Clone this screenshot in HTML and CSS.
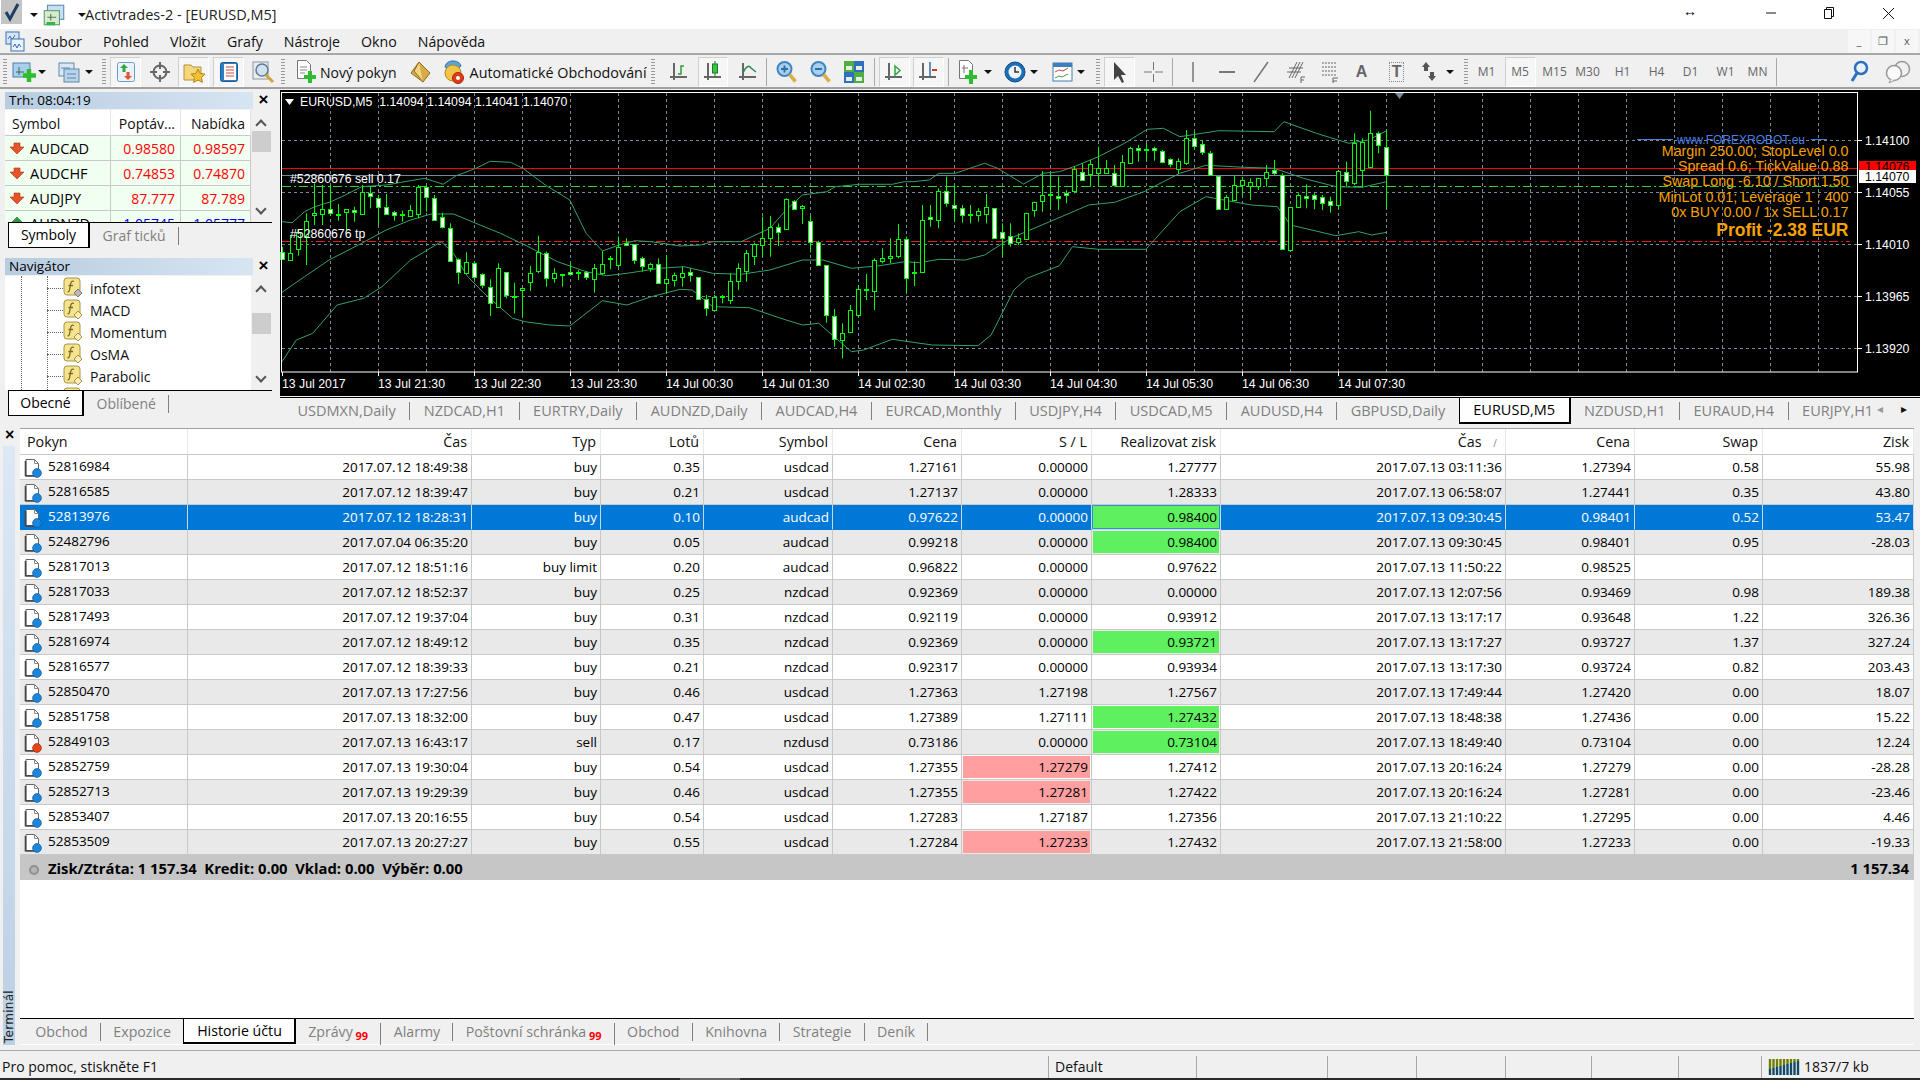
FILE: index.html
```html
<!DOCTYPE html>
<html lang="cs">
  <head>
    <meta charset="UTF-8" />
    <title>Activtrades-2 - [EURUSD,M5]</title>
    <link rel="stylesheet" href="styles.css">
  </head>
  <body>
    <!-- Shared icons -->
    <svg class="defs" width="0" height="0">
      <symbol id="axes" viewBox="0 0 20 24">
        <path d="M5 3v17M1 17h17" fill="none" stroke="#666" stroke-width="2"/>
      </symbol>
      <symbol id="ord" viewBox="0 0 18 20">
        <path d="M2 1.500h8.500l4 4v12H2z" fill="#fff" stroke="#666"/>
        <path d="M10.500 1.500v4h4" fill="none" stroke="#888"/>
        <path d="M2 18h10M1.500 3v15.500" stroke="#444" stroke-width="1.600"/>
        <circle cx="13" cy="15" r="4.400" fill="#1c86dc" stroke="#0d5a9c" stroke-width=".7"/>
      </symbol>
      <symbol id="ord-sell" viewBox="0 0 18 20">
        <path d="M2 1.500h8.500l4 4v12H2z" fill="#fff" stroke="#666"/>
        <path d="M10.500 1.500v4h4" fill="none" stroke="#888"/>
        <path d="M2 18h10M1.500 3v15.500" stroke="#444" stroke-width="1.600"/>
        <circle cx="13" cy="15" r="4.400" fill="#e8461a" stroke="#a02c0a" stroke-width=".7"/>
      </symbol>
      <symbol id="arrow-down" viewBox="0 0 16 14">
        <path d="M5 2h6v4h4l-7 7-7-7h4z" fill="#e8532a" stroke="#a8381a" stroke-width=".6"/>
      </symbol>
      <symbol id="arrow-up" viewBox="0 0 16 14">
        <path d="M5 13h6V8h4L8 1 1 8h4z" fill="#2e9a3a" stroke="#1d6a28" stroke-width=".6"/>
      </symbol>
      <symbol id="func" viewBox="0 0 20 22">
        <rect x="1" y="1" width="16" height="17" rx="3" fill="#f5e48c" stroke="#a8934a"/>
        <path d="M11 4.500c-2-.8-3 0-3.300 2L6.500 13c-.3 1.600-1 2-2 1.700M5.500 8.500h4.500" fill="none" stroke="#77692a" stroke-width="1.300"/>
        <path d="M15 12l4 4-4 4-4-4z" fill="#f7eeb4" stroke="#a8934a"/>
      </symbol>
      <symbol id="func-grey" viewBox="0 0 20 22">
        <rect x="1" y="1" width="16" height="17" rx="3" fill="#f5e48c" stroke="#a8934a"/>
        <path d="M11 4.500c-2-.8-3 0-3.300 2L6.500 13c-.3 1.600-1 2-2 1.700M5.500 8.500h4.500" fill="none" stroke="#77692a" stroke-width="1.300"/>
        <path d="M15 12l4 4-4 4-4-4z" fill="#b8b8b8" stroke="#777"/>
      </symbol>
    </svg>

    <!-- Window title -->
    <div class="titlebar">
      <span class="qa-check">
        <svg width="20" height="22" viewBox="0 0 20 22"><path d="M4 11l4 7 8-15" fill="none" stroke="#1c3f66" stroke-width="3"/></svg>
      </span>
      <span class="caret ml8"></span>
      <svg class="ml4" width="24" height="26" viewBox="0 0 22 24">
        <rect x="5" y="3" width="15" height="13" fill="#c7dff2" stroke="#5b8db8"/>
        <rect x="2" y="8" width="14" height="13" fill="#d8ead0" stroke="#5f9a70"/>
        <path d="M5 14h8M8 11v6" stroke="#4b7a58"/>
        <path d="M4 20h8" stroke="#39b14a" stroke-width="3"/>
      </svg>
      <span class="caret ml12"></span>
      <span class="window-name">Activtrades-2 - [EURUSD,M5]</span>
      <span class="win-resize">↔</span>
      <svg class="win-btn" width="12" height="12" viewBox="0 0 12 12"><path d="M1 6h10" stroke="#111"/></svg>
      <svg class="win-btn restore" width="12" height="14" viewBox="0 0 12 14"><path d="M3.500 3.500V1.500h7v9h-2M1.500 3.500h7v9h-7z" fill="none" stroke="#111"/></svg>
      <svg class="win-btn close" width="13" height="13" viewBox="0 0 13 13"><path d="M1 1l11 11M12 1L1 12" stroke="#111"/></svg>
    </div>

    <!-- Menu -->
    <div class="menubar">
      <svg class="menu-logo" width="20" height="22" viewBox="0 0 20 22">
        <rect x="1" y="1" width="13" height="12" fill="#d5e6f7" stroke="#3f6fb5"/>
        <path d="M3 8l2-3 2 4 3-5" fill="none" stroke="#3f6fb5"/>
        <rect x="6" y="8" width="13" height="12" fill="#eaf2fb" stroke="#3f6fb5"/>
        <path d="M8 16l2-3 2 4 2-4 2 3" fill="none" stroke="#3f6fb5"/>
      </svg>
      <span class="menu-item first">Soubor</span>
      <span class="menu-item">Pohled</span>
      <span class="menu-item">Vložit</span>
      <span class="menu-item">Grafy</span>
      <span class="menu-item">Nástroje</span>
      <span class="menu-item">Okno</span>
      <span class="menu-item">Nápověda</span>
      <div class="mdi-btns">
        <span class="mdi-btn">_</span>
        <span class="mdi-btn">❐</span>
        <span class="mdi-btn">x</span>
      </div>
    </div>

    <!-- Toolbar -->
    <div class="toolbar">
      <span class="grip ml3"></span>
      <span class="tool w24 ml5">
        <svg width="24" height="24" viewBox="0 0 24 24"><rect x="1" y="3" width="17" height="14" fill="#a9cfee" stroke="#4c7fa8"/><path d="M4 12h8M7 7v8" stroke="#3b6a50"/><path d="M17 9v13M11 15.500h13" stroke="#2ebd2e" stroke-width="4.500"/></svg>
      </span>
      <span class="caret-box ml2"><span class="caret"></span></span>
      <span class="tool w22 ml12">
        <svg width="22" height="24" viewBox="0 0 22 24"><rect x="1" y="3" width="15" height="13" fill="#dbe8f3" stroke="#5f87a8"/><rect x="6" y="9" width="15" height="13" fill="#b9d4ea" stroke="#5f87a8"/><path d="M3 8h9M9 14h9M9 18h9" stroke="#5f87a8"/></svg>
      </span>
      <span class="caret-box ml5"><span class="caret"></span></span>
      <span class="grip ml9"></span>
      <span class="tool on w31 ml4">
        <svg width="20" height="22" viewBox="0 0 20 22"><rect x="1.500" y="1.500" width="17" height="19" rx="2" fill="#eaf3fb" stroke="#6f9dc5"/><path d="M8 3l4 4H9.500v4h-3V7H4z" fill="#36a843"/><path d="M12 19l-4-4h2.500v-4h3v4H16z" fill="#e8532a"/></svg>
      </span>
      <span class="tool w20 ml9">
        <svg width="20" height="22" viewBox="0 0 20 22"><circle cx="10" cy="11" r="6.500" fill="none" stroke="#666" stroke-width="2"/><path d="M10 1v7M10 14v7M0 11h7M13 11h7" stroke="#666" stroke-width="2"/></svg>
      </span>
      <span class="tool on w31 ml8">
        <svg width="24" height="24" viewBox="0 0 24 24"><path d="M2 5h7l2 2h8v13H2z" fill="#f5d67a" stroke="#b2923d"/><path d="M16 9l2.200 4.500 4.800.6-3.500 3.400.9 4.900-4.400-2.400-4.400 2.400.9-4.900L9 14.100l4.800-.6z" fill="#f2c230" stroke="#b0861b"/></svg>
      </span>
      <span class="tool on w31 ml4">
        <svg width="20" height="24" viewBox="0 0 20 24"><rect x="1.500" y="2.500" width="17" height="19" rx="2" fill="#2b7fc7" stroke="#1c5a94"/><rect x="5" y="4" width="12" height="16" fill="#fff"/><path d="M7 7h8M7 10h8M7 13h8M7 16h8" stroke="#d24a3a"/></svg>
      </span>
      <span class="tool w25 ml7">
        <svg width="25" height="24" viewBox="0 0 25 24"><rect x="2" y="2" width="15" height="17" fill="#e9edf0" stroke="#8a97a3"/><circle cx="11" cy="10" r="6" fill="#cfe2f2" stroke="#66788a" stroke-width="1.500"/><path d="M15 15l7 7" stroke="#d0a635" stroke-width="3"/></svg>
      </span>
      <span class="grip ml5"></span>
      <span class="tool w20 ml11">
        <svg width="22" height="26" viewBox="0 0 22 26"><path d="M2.500 1.500h9l4 4v14h-13z" fill="#fff" stroke="#777"/><path d="M5 8h7M5 11h7M5 14h5" stroke="#888"/><path d="M15 12v12M9 18h12" stroke="#2ebd2e" stroke-width="4"/></svg>
      </span>
      <span class="tool-label ml4">Nový pokyn</span>
      <span class="tool w23 ml12">
        <svg width="23" height="24" viewBox="0 0 23 24"><path d="M10 2l11 11-7 9L2 13z" fill="#d7ab45" stroke="#8f6d22"/><path d="M10 2L5 11l9 11" fill="#f2d27e" stroke="#8f6d22"/></svg>
      </span>
      <span class="tool w22 ml11">
        <svg width="24" height="26" viewBox="0 0 24 26"><path d="M3 8c1-5 5-6 8-6s7 1 8 5l-4 3H7z" fill="#5ea4d6" stroke="#2f6f9e"/><circle cx="11" cy="14" r="8" fill="#f2c54a" stroke="#b08a22"/><circle cx="16" cy="19" r="5.500" fill="#e23b1c" stroke="#a52810"/><circle cx="16" cy="19" r="2" fill="#fff"/></svg>
      </span>
      <span class="tool-label auto-label ml5">Automatické Obchodování</span>
      <span class="grip ml4"></span>
      <span class="tool w20 ml14">
        <svg width="20" height="24" viewBox="0 0 20 24"><use href="#axes"/><path d="M9 14h3V6h3" fill="none" stroke="#2e9a3a" stroke-width="1.500"/></svg>
      </span>
      <span class="tool on w30 ml9">
        <svg width="20" height="24" viewBox="0 0 20 24"><use href="#axes"/><path d="M12 1v16" stroke="#1d7a2a"/><rect x="9.500" y="4" width="5" height="9" fill="#35c63d" stroke="#1d7a2a"/></svg>
      </span>
      <span class="tool w20 ml10">
        <svg width="20" height="24" viewBox="0 0 20 24"><use href="#axes"/><path d="M5 13c3-7 6-8 8-5l5 4" fill="none" stroke="#2e8b57" stroke-width="1.500"/></svg>
      </span>
      <span class="tb-sep ml8"></span>
      <span class="tool w21 ml9">
        <svg width="21" height="24" viewBox="0 0 21 24"><circle cx="8.500" cy="9" r="7" fill="#a9d0ee" stroke="#3f86c2" stroke-width="2"/><path d="M5 9h7M8.500 5.500v7" stroke="#2f6fa5" stroke-width="2"/><path d="M13.500 14.500l6 7" stroke="#d8b045" stroke-width="3.500"/></svg>
      </span>
      <span class="tool w21 ml13">
        <svg width="21" height="24" viewBox="0 0 21 24"><circle cx="8.500" cy="9" r="7" fill="#a9d0ee" stroke="#3f86c2" stroke-width="2"/><path d="M5 9h7" stroke="#2f6fa5" stroke-width="2"/><path d="M13.500 14.500l6 7" stroke="#d8b045" stroke-width="3.500"/></svg>
      </span>
      <span class="tool w20 ml13">
        <svg width="20" height="24" viewBox="0 0 20 24"><rect x="0" y="1" width="10" height="11" fill="#4fae3f"/><rect x="10" y="1" width="10" height="11" fill="#2e6fc0"/><rect x="0" y="12" width="10" height="11" fill="#2e6fc0"/><rect x="10" y="12" width="10" height="11" fill="#4fae3f"/><path d="M2 6h6v4H2zM12 6h6v4h-6zM2 17h6v4H2zM12 17h6v4h-6z" fill="#e6f0e0"/></svg>
      </span>
      <span class="tb-sep ml10"></span>
      <span class="tool on w31 ml4">
        <svg width="20" height="24" viewBox="0 0 20 24"><use href="#axes"/><path d="M11 6l5 4.500-5 4.500z" fill="none" stroke="#2ea83a" stroke-width="1.500"/></svg>
      </span>
      <span class="tool on w31 ml3">
        <svg width="20" height="24" viewBox="0 0 20 24"><use href="#axes"/><path d="M12 2v15" stroke="#2f6fa5" stroke-width="1.500"/><path d="M19 10h-3M18 10l-4 0" stroke="#d9381e" stroke-width="2"/></svg>
      </span>
      <span class="tb-sep ml4"></span>
      <span class="tool w20 ml10">
        <svg width="22" height="26" viewBox="0 0 22 26"><path d="M1.500 1.500h9l4 4v14h-13z" fill="#fff" stroke="#777"/><path d="M4 9h6M6 6v8" stroke="#777"/><path d="M13 11v14M7 18h12" stroke="#2ebd2e" stroke-width="4"/></svg>
      </span>
      <span class="caret-box ml5"><span class="caret"></span></span>
      <span class="tool w20 ml13">
        <svg width="22" height="24" viewBox="0 0 22 24"><circle cx="11" cy="12" r="10" fill="#1b6fb5" stroke="#0f4d85"/><circle cx="11" cy="12" r="6.500" fill="#eef4fa"/><path d="M11 7v5h4" fill="none" stroke="#333" stroke-width="1.500"/></svg>
      </span>
      <span class="caret-box ml5"><span class="caret"></span></span>
      <span class="tool w21 ml14">
        <svg width="21" height="24" viewBox="0 0 21 24"><rect x="1" y="3" width="19" height="18" fill="#fff" stroke="#3d7fb8"/><rect x="1" y="3" width="19" height="4" fill="#3d7fb8"/><path d="M3 12l4-2 4 1 5-3" fill="none" stroke="#c9482f"/><path d="M3 18l4-2 3 1 6-3" fill="none" stroke="#3aa04a"/></svg>
      </span>
      <span class="caret-box ml4"><span class="caret"></span></span>
      <span class="grip ml11"></span>
      <span class="tool on w31 ml4">
        <svg width="14" height="24" viewBox="0 0 14 24"><path d="M2 2v18l4-4 4 7 2-1-3-7h5z" fill="#444"/></svg>
      </span>
      <span class="tool w21 ml8">
        <svg width="21" height="24" viewBox="0 0 21 24"><path d="M10.500 2v8M10.500 14v8M1 12h8M12 12h8" stroke="#777"/></svg>
      </span>
      <span class="tb-sep ml8"></span>
      <span class="tool w20 ml10">
        <svg width="20" height="24" viewBox="0 0 20 24"><path d="M10 2v20" stroke="#777" stroke-width="1.500"/></svg>
      </span>
      <span class="tool w20 ml14">
        <svg width="20" height="24" viewBox="0 0 20 24"><path d="M2 12h16" stroke="#777" stroke-width="2"/></svg>
      </span>
      <span class="tool w20 ml14">
        <svg width="20" height="24" viewBox="0 0 20 24"><path d="M3 22L17 2" stroke="#777" stroke-width="1.500"/></svg>
      </span>
      <span class="tool w20 ml15">
        <svg width="20" height="24" viewBox="0 0 20 24"><path d="M3 18L11 2M6 18L14 2M9 18L17 2M1 12h14M3 8h14" stroke="#666"/><path d="M15 17h4M15 20h3M15 17v6" stroke="#666"/></svg>
      </span>
      <span class="tool w20 ml14">
        <svg width="20" height="24" viewBox="0 0 20 24"><path d="M2 3h14M2 7h14M2 11h14M2 15h14" stroke="#666" stroke-dasharray="2 1"/><path d="M13 18h5M13 21h4M13 18v5" stroke="#666"/></svg>
      </span>
      <span class="tool w20 ml12"><span class="draw-letter">A</span></span>
      <span class="tool w20 ml15"><span class="draw-letter boxed">T</span></span>
      <span class="tool w20 ml12">
        <svg width="20" height="24" viewBox="0 0 20 24"><path d="M7 2l4 5H9v4H5V7H3z" fill="#555"/><path d="M13 21l-4-5h2v-4h4v4h2z" fill="#555"/></svg>
      </span>
      <span class="caret-box ml7"><span class="caret"></span></span>
      <span class="grip ml10"></span>
      <span class="period ml5">M1</span>
      <span class="period on wide ml4">M5</span>
      <span class="period ml5">M15</span>
      <span class="period ml5">M30</span>
      <span class="period ml7">H1</span>
      <span class="period ml6">H4</span>
      <span class="period ml6">D1</span>
      <span class="period ml7">W1</span>
      <span class="period ml4">MN</span>
      <span class="tb-sep ml4"></span>
      <span class="tool w20 push">
        <svg width="20" height="24" viewBox="0 0 20 24"><circle cx="12" cy="8" r="6" fill="#e8f2fb" stroke="#2d6fc0" stroke-width="2.500"/><path d="M8 13l-5 8" stroke="#2d6fc0" stroke-width="3"/></svg>
      </span>
      <span class="tool w24 ml17">
        <svg width="26" height="24" viewBox="0 0 26 24"><circle cx="17" cy="9" r="7.500" fill="#f0f0f0" stroke="#999" stroke-width="1.500"/><circle cx="9" cy="13" r="7.500" fill="#fafafa" stroke="#999" stroke-width="1.500"/><path d="M6 19l-2 4 6-3" fill="#fafafa" stroke="#999"/></svg>
      </span>
    </div>

    <!-- Market watch, navigator and chart -->
    <div class="workspace">
      <div class="side">
        <div class="panel market">
          <div class="panel-head">
            <span class="panel-title">Trh: 08:04:19</span>
            <span class="panel-x">×</span>
          </div>
          <div class="panel-body mw-body">
            <div class="mw-list">
              <table class="mw-table">
                <tr class="mw-head"><th class="mw-sym">Symbol</th><th class="mw-num">Poptáv...</th><th class="mw-num">Nabídka</th></tr>
                <tr class="down"><td class="mw-sym"><svg class="mw-arrow" width="16" height="14"><use href="#arrow-down"/></svg>AUDCAD</td><td>0.98580</td><td>0.98597</td></tr>
                <tr class="down"><td class="mw-sym"><svg class="mw-arrow" width="16" height="14"><use href="#arrow-down"/></svg>AUDCHF</td><td>0.74853</td><td>0.74870</td></tr>
                <tr class="down"><td class="mw-sym"><svg class="mw-arrow" width="16" height="14"><use href="#arrow-down"/></svg>AUDJPY</td><td>87.777</td><td>87.789</td></tr>
                <tr class="up"><td class="mw-sym"><svg class="mw-arrow" width="16" height="14"><use href="#arrow-up"/></svg>AUDNZD</td><td>1.05745</td><td>1.05777</td></tr>
              </table>
            </div>
            <div class="scroll">
              <span class="scroll-up"></span>
              <span class="scroll-thumb mw-thumb"></span>
              <span class="scroll-down"></span>
            </div>
          </div>
          <div class="side-tabs">
            <span class="side-tab active mw-tab">Symboly</span>
            <span class="side-tab">Graf ticků</span>
          </div>
        </div>

        <div class="panel nav">
          <div class="panel-head">
            <span class="panel-title">Navigátor</span>
            <span class="panel-x">×</span>
          </div>
          <div class="panel-body nav-body">
            <div class="nav-list">
              <span class="guide first"></span>
              <span class="guide second"></span>
              <div class="nav-row"><span class="nav-dash"></span><svg width="20" height="22"><use href="#func-grey"/></svg><span class="nav-name">infotext</span></div>
              <div class="nav-row"><span class="nav-dash"></span><svg width="20" height="22"><use href="#func"/></svg><span class="nav-name">MACD</span></div>
              <div class="nav-row"><span class="nav-dash"></span><svg width="20" height="22"><use href="#func"/></svg><span class="nav-name">Momentum</span></div>
              <div class="nav-row"><span class="nav-dash"></span><svg width="20" height="22"><use href="#func"/></svg><span class="nav-name">OsMA</span></div>
              <div class="nav-row"><span class="nav-dash"></span><svg width="20" height="22"><use href="#func"/></svg><span class="nav-name">Parabolic</span></div>
              <div class="nav-row"><span class="nav-dash"></span><svg width="20" height="22"><use href="#func"/></svg></div>
            </div>
            <div class="scroll">
              <span class="scroll-up"></span>
              <span class="scroll-thumb nav-thumb"></span>
              <span class="scroll-down"></span>
            </div>
          </div>
          <div class="side-tabs">
            <span class="side-tab active nav-tab">Obecné</span>
            <span class="side-tab">Oblíbené</span>
          </div>
        </div>
      </div>

      <div class="chart-col">
        <svg id="chart" class="chart" width="1640" height="306" viewBox="280 90 1640 306"></svg>
        <div class="chart-tabs">
          <span class="chart-tab">USDMXN,Daily</span>
          <span class="chart-tab">NZDCAD,H1</span>
          <span class="chart-tab">EURTRY,Daily</span>
          <span class="chart-tab">AUDNZD,Daily</span>
          <span class="chart-tab">AUDCAD,H4</span>
          <span class="chart-tab">EURCAD,Monthly</span>
          <span class="chart-tab">USDJPY,H4</span>
          <span class="chart-tab">USDCAD,M5</span>
          <span class="chart-tab">AUDUSD,H4</span>
          <span class="chart-tab">GBPUSD,Daily</span>
          <span class="chart-tab active">EURUSD,M5</span>
          <span class="chart-tab">NZDUSD,H1</span>
          <span class="chart-tab">EURAUD,H4</span>
          <span class="chart-tab last">EURJPY,H1</span>
          <span class="tab-arrow prev">◂</span>
          <span class="tab-arrow next">▸</span>
        </div>
      </div>
    </div>

    <!-- Terminal -->
    <div class="terminal">
      <div class="term-side">
        <span class="term-x">×</span>
        <div class="term-strip"><span class="term-name">Terminál</span></div>
      </div>
      <div class="term-main">
        <div class="term-sheet">
          <table class="orders">
            <colgroup>
              <col class="c168"><col class="c284"><col class="c129"><col class="c103"><col class="c129"><col class="c129"><col class="c130"><col class="c129"><col class="c285"><col class="c129"><col class="c128"><col class="c151">
            </colgroup>
            <tr class="order-head"><th class="left">Pokyn</th><th>Čas</th><th>Typ</th><th>Lotů</th><th>Symbol</th><th>Cena</th><th>S / L</th><th>Realizovat zisk</th><th class="sorted">Čas <span class="sort-mark">/</span></th><th>Cena</th><th>Swap</th><th>Zisk</th></tr>
            <tr><td class="id"><svg width="18" height="20"><use href="#ord"/></svg>52816984</td><td>2017.07.12 18:49:38</td><td>buy</td><td>0.35</td><td>usdcad</td><td>1.27161</td><td>0.00000</td><td>1.27777</td><td>2017.07.13 03:11:36</td><td>1.27394</td><td>0.58</td><td>55.98</td></tr>
            <tr class="alt"><td class="id"><svg width="18" height="20"><use href="#ord"/></svg>52816585</td><td>2017.07.12 18:39:47</td><td>buy</td><td>0.21</td><td>usdcad</td><td>1.27137</td><td>0.00000</td><td>1.28333</td><td>2017.07.13 06:58:07</td><td>1.27441</td><td>0.35</td><td>43.80</td></tr>
            <tr class="selected"><td class="id"><svg width="18" height="20"><use href="#ord"/></svg>52813976</td><td>2017.07.12 18:28:31</td><td>buy</td><td>0.10</td><td>audcad</td><td>0.97622</td><td>0.00000</td><td class="hit-tp">0.98400</td><td>2017.07.13 09:30:45</td><td>0.98401</td><td>0.52</td><td>53.47</td></tr>
            <tr class="alt"><td class="id"><svg width="18" height="20"><use href="#ord"/></svg>52482796</td><td>2017.07.04 06:35:20</td><td>buy</td><td>0.05</td><td>audcad</td><td>0.99218</td><td>0.00000</td><td class="hit-tp">0.98400</td><td>2017.07.13 09:30:45</td><td>0.98401</td><td>0.95</td><td>-28.03</td></tr>
            <tr><td class="id"><svg width="18" height="20"><use href="#ord"/></svg>52817013</td><td>2017.07.12 18:51:16</td><td>buy limit</td><td>0.20</td><td>audcad</td><td>0.96822</td><td>0.00000</td><td>0.97622</td><td>2017.07.13 11:50:22</td><td>0.98525</td><td></td><td></td></tr>
            <tr class="alt"><td class="id"><svg width="18" height="20"><use href="#ord"/></svg>52817033</td><td>2017.07.12 18:52:37</td><td>buy</td><td>0.25</td><td>nzdcad</td><td>0.92369</td><td>0.00000</td><td>0.00000</td><td>2017.07.13 12:07:56</td><td>0.93469</td><td>0.98</td><td>189.38</td></tr>
            <tr><td class="id"><svg width="18" height="20"><use href="#ord"/></svg>52817493</td><td>2017.07.12 19:37:04</td><td>buy</td><td>0.31</td><td>nzdcad</td><td>0.92119</td><td>0.00000</td><td>0.93912</td><td>2017.07.13 13:17:17</td><td>0.93648</td><td>1.22</td><td>326.36</td></tr>
            <tr class="alt"><td class="id"><svg width="18" height="20"><use href="#ord"/></svg>52816974</td><td>2017.07.12 18:49:12</td><td>buy</td><td>0.35</td><td>nzdcad</td><td>0.92369</td><td>0.00000</td><td class="hit-tp">0.93721</td><td>2017.07.13 13:17:27</td><td>0.93727</td><td>1.37</td><td>327.24</td></tr>
            <tr><td class="id"><svg width="18" height="20"><use href="#ord"/></svg>52816577</td><td>2017.07.12 18:39:33</td><td>buy</td><td>0.21</td><td>nzdcad</td><td>0.92317</td><td>0.00000</td><td>0.93934</td><td>2017.07.13 13:17:30</td><td>0.93724</td><td>0.82</td><td>203.43</td></tr>
            <tr class="alt"><td class="id"><svg width="18" height="20"><use href="#ord"/></svg>52850470</td><td>2017.07.13 17:27:56</td><td>buy</td><td>0.46</td><td>usdcad</td><td>1.27363</td><td>1.27198</td><td>1.27567</td><td>2017.07.13 17:49:44</td><td>1.27420</td><td>0.00</td><td>18.07</td></tr>
            <tr><td class="id"><svg width="18" height="20"><use href="#ord"/></svg>52851758</td><td>2017.07.13 18:32:00</td><td>buy</td><td>0.47</td><td>usdcad</td><td>1.27389</td><td>1.27111</td><td class="hit-tp">1.27432</td><td>2017.07.13 18:48:38</td><td>1.27436</td><td>0.00</td><td>15.22</td></tr>
            <tr class="alt"><td class="id"><svg width="18" height="20"><use href="#ord-sell"/></svg>52849103</td><td>2017.07.13 16:43:17</td><td>sell</td><td>0.17</td><td>nzdusd</td><td>0.73186</td><td>0.00000</td><td class="hit-tp">0.73104</td><td>2017.07.13 18:49:40</td><td>0.73104</td><td>0.00</td><td>12.24</td></tr>
            <tr><td class="id"><svg width="18" height="20"><use href="#ord"/></svg>52852759</td><td>2017.07.13 19:30:04</td><td>buy</td><td>0.54</td><td>usdcad</td><td>1.27355</td><td class="hit-sl">1.27279</td><td>1.27412</td><td>2017.07.13 20:16:24</td><td>1.27279</td><td>0.00</td><td>-28.28</td></tr>
            <tr class="alt"><td class="id"><svg width="18" height="20"><use href="#ord"/></svg>52852713</td><td>2017.07.13 19:29:39</td><td>buy</td><td>0.46</td><td>usdcad</td><td>1.27355</td><td class="hit-sl">1.27281</td><td>1.27422</td><td>2017.07.13 20:16:24</td><td>1.27281</td><td>0.00</td><td>-23.46</td></tr>
            <tr><td class="id"><svg width="18" height="20"><use href="#ord"/></svg>52853407</td><td>2017.07.13 20:16:55</td><td>buy</td><td>0.54</td><td>usdcad</td><td>1.27283</td><td>1.27187</td><td>1.27356</td><td>2017.07.13 21:10:22</td><td>1.27295</td><td>0.00</td><td>4.46</td></tr>
            <tr class="alt"><td class="id"><svg width="18" height="20"><use href="#ord"/></svg>52853509</td><td>2017.07.13 20:27:27</td><td>buy</td><td>0.55</td><td>usdcad</td><td>1.27284</td><td class="hit-sl">1.27233</td><td>1.27432</td><td>2017.07.13 21:58:00</td><td>1.27233</td><td>0.00</td><td>-19.33</td></tr>
            <tr class="total">
              <td class="id" colspan="11"><span class="total-dot"></span>Zisk/Ztráta: 1 157.34&nbsp; Kredit: 0.00&nbsp; Vklad: 0.00&nbsp; Výběr: 0.00</td>
              <td>1 157.34</td>
            </tr>
          </table>
        </div>
        <div class="term-tabs">
          <span class="term-tab">Obchod</span>
          <span class="term-tab">Expozice</span>
          <span class="term-tab active">Historie účtu</span>
          <span class="term-tab">Zprávy <b class="count">99</b></span>
          <span class="term-tab">Alarmy</span>
          <span class="term-tab">Poštovní schránka <b class="count">99</b></span>
          <span class="term-tab">Obchod</span>
          <span class="term-tab">Knihovna</span>
          <span class="term-tab">Strategie</span>
          <span class="term-tab">Deník</span>
        </div>
      </div>
    </div>

    <!-- Status bar -->
    <div class="statusbar">
      <span class="st st-help">Pro pomoc, stiskněte F1</span>
      <span class="st st-profile">Default</span>
      <span class="st st-131"></span>
      <span class="st st-89"></span>
      <span class="st st-89"></span>
      <span class="st st-86"></span>
      <span class="st st-87"></span>
      <span class="st st-83"></span>
      <span class="st st-conn">
        <svg width="32" height="16" viewBox="0 0 32 16">
          <path d="M2 0v10M5.500 0v9M9 0v8M12.500 0v7M16 0v6M19.500 0v5M23 0v4M26.500 0v3M30 0v2" stroke="#6d7f00" stroke-width="2.400"/>
          <path d="M2 10v6M5.500 9v7M9 8v8M12.500 7v9M16 6v10M19.500 5v11M23 4v12M26.500 3v13M30 2v14" stroke="#10496a" stroke-width="2.400"/>
        </svg>
        1837/7 kb
      </span>
    </div>
    <div class="taskbar"><span class="task-thumb"></span></div>

    <script src="chart.js"></script>
  </body>
</html>
```

FILE: styles.css
```css
/* General page */
* {
  box-sizing: border-box;
}

body {
  margin: 0;
  width: 1920px;
  height: 1080px;
  overflow: hidden;
  background: #f0f0f0;
  color: #000;
  font-family: "Open Sans", "Liberation Sans", sans-serif;
  font-size: 14px;
}

.defs {
  position: absolute;
}

svg {
  display: block;
  flex: none;
}

/* Spacing helpers for the toolbar */
.ml2 { margin-left: 2px; }
.ml3 { margin-left: 3px; }
.ml4 { margin-left: 4px; }
.ml5 { margin-left: 5px; }
.ml6 { margin-left: 6px; }
.ml7 { margin-left: 7px; }
.ml8 { margin-left: 8px; }
.ml9 { margin-left: 9px; }
.ml10 { margin-left: 10px; }
.ml11 { margin-left: 11px; }
.ml12 { margin-left: 12px; }
.ml13 { margin-left: 13px; }
.ml14 { margin-left: 14px; }
.ml15 { margin-left: 15px; }
.ml17 { margin-left: 17px; }

.w20 { width: 20px; }
.w21 { width: 21px; }
.w22 { width: 22px; }
.w23 { width: 23px; }
.w24 { width: 24px; }
.w25 { width: 25px; }
.w30 { width: 30px; }
.w31 { width: 31px; }

.caret {
  display: block;
  flex: none;
  width: 0;
  height: 0;
  border-left: 4px solid transparent;
  border-right: 4px solid transparent;
  border-top: 4px solid #111;
}

/* Title bar */
.titlebar {
  display: flex;
  align-items: center;
  height: 29px;
  background: #fff;
}

.qa-check {
  display: flex;
  align-items: center;
  justify-content: center;
  width: 21px;
  height: 24px;
  margin: 0 0 5px 1px;
  background: #c4c4c4;
}

.window-name {
  margin-left: -1px;
  font-size: 14.500px;
  color: #222;
}

.win-resize {
  position: absolute;
  left: 1683px;
  top: 1px;
  font-size: 14px;
}

.win-btn {
  position: absolute;
  top: 7px;
  left: 1765px;
}

.win-btn.restore {
  left: 1823px;
  top: 6px;
}

.win-btn.close {
  left: 1882px;
}

/* Menu */
.menubar {
  display: flex;
  align-items: center;
  height: 26px;
  padding-left: 5px;
  border-bottom: 2px solid #a8a8a8;
}

.menu-logo {
  margin-top: 2px;
}

.menu-item {
  margin-left: 21px;
  font-size: 14.200px;
  color: #111;
}

.menu-item.first {
  margin-left: 9px;
}

.mdi-btns {
  display: flex;
  gap: 2px;
  margin-left: auto;
  margin-right: 2px;
}

.mdi-btn {
  width: 22px;
  height: 23px;
  background: #f7f7f7;
  color: #555;
  text-align: center;
  font-size: 11px;
  line-height: 22px;
}

/* Toolbar */
.toolbar {
  display: flex;
  align-items: center;
  height: 34px;
  padding: 2px 10px 0 0;
  border-bottom: 2px solid #a0a0a0;
}

.grip {
  flex: none;
  width: 4px;
  height: 26px;
  background: repeating-linear-gradient(to bottom, #999 0 1px, transparent 1px 3px);
}

.tool {
  display: flex;
  flex: none;
  align-items: center;
  justify-content: center;
  height: 30px;
}

.tool.on {
  border: 1px solid;
  border-color: #cfcfcf #fff #fff #cfcfcf;
  background: #f6f6f6;
}

.tool.push {
  margin-left: auto;
}

.tool-label {
  flex: none;
  font-size: 14px;
  color: #111;
}

.tool-label.auto-label {
  font-size: 14.350px;
}

.caret-box {
  display: flex;
  flex: none;
  align-items: center;
  justify-content: center;
  width: 8px;
}

.tb-sep {
  flex: none;
  width: 1px;
  height: 28px;
  background: #a8a8a8;
}

.draw-letter {
  font-family: "Liberation Sans", sans-serif;
  font-size: 16px;
  font-weight: bold;
  color: #666;
}

.draw-letter.boxed {
  padding: 0 2px;
  border: 1px dotted #888;
}

.period {
  flex: none;
  width: 28px;
  height: 30px;
  color: #666;
  font-size: 12px;
  line-height: 30px;
  text-align: center;
}

.period.on {
  border: 1px solid;
  border-color: #cfcfcf #fff #fff #cfcfcf;
  background: #f6f6f6;
  line-height: 28px;
}

.period.wide {
  width: 31px;
}

/* Left column and chart */
.workspace {
  display: flex;
  height: 336px;
}

.side {
  flex: none;
  width: 280px;
  padding: 3px 6px 0 5px;
}

.panel {
  display: flex;
  flex-direction: column;
}

.panel.market {
  height: 159px;
  margin-bottom: 7px;
}

.panel.nav {
  height: 159px;
}

.panel-head {
  display: flex;
  flex: none;
  height: 17px;
}

.panel-title {
  width: 248px;
  padding-left: 4px;
  background: linear-gradient(to right, #b7cce0, #d7e5f3);
  font-size: 13.500px;
  line-height: 16px;
}

.panel-x {
  width: 21px;
  text-align: center;
  font-family: "Liberation Sans", sans-serif;
  font-size: 17px;
  font-weight: bold;
  line-height: 15px;
}

.panel-body {
  display: flex;
  margin-top: 1px;
  overflow: hidden;
}

.mw-body {
  height: 112px;
}

.nav-body {
  height: 114px;
}

.mw-list {
  width: 246px;
  background: #fff;
  overflow: hidden;
}

.mw-table {
  width: 246px;
  table-layout: fixed;
  border-collapse: separate;
  border-spacing: 0;
  font-size: 14px;
}

.mw-table th,
.mw-table td {
  height: 25px;
  padding: 0 5px 0 0;
  border-right: 1px solid #c9c9c9;
  border-bottom: 1px solid #c9c9c9;
  font-weight: normal;
  text-align: right;
}

.mw-table th {
  height: 26px;
  padding-top: 1px;
  border-color: #e4e4e4;
  border-bottom-color: #c9c9c9;
  color: #111;
}

.mw-table th.mw-sym {
  width: 106px;
  padding-left: 7px;
  text-align: left;
}

.mw-table .mw-num {
  width: 70px;
}

.mw-table td {
  background: #f0fff0;
}

.mw-table td.mw-sym {
  display: flex;
  align-items: center;
  padding-left: 4px;
  font-size: 14.500px;
  text-align: left;
  color: #000;
}

.mw-arrow {
  margin-right: 5px;
}

.down td {
  color: #f00;
}

.up td {
  color: #00f;
}

.scroll {
  position: relative;
  flex: none;
  width: 19px;
  margin-left: 1px;
  background: #f0f0f0;
}

.scroll-up,
.scroll-down {
  position: absolute;
  left: 5px;
  width: 8px;
  height: 8px;
  border: solid #555;
  border-width: 2px 0 0 2px;
}

.scroll-up {
  top: 11px;
  transform: rotate(45deg);
}

.scroll-down {
  bottom: 9px;
  transform: rotate(225deg);
}

.scroll-thumb {
  position: absolute;
  left: 0;
  width: 19px;
  height: 21px;
  background: #cdcdcd;
}

.mw-thumb {
  top: 21px;
}

.nav-thumb {
  top: 37px;
}

.side-tabs {
  display: flex;
  flex: none;
  align-items: center;
  height: 26px;
  width: 264px;
  border-top: 1px solid #000;
  margin-left: 3px;
}

.side-tab {
  padding: 0 12.500px;
  border-right: 1px solid #808080;
  color: #808080;
  font-size: 14px;
  line-height: 18px;
}

.side-tab.active {
  display: flex;
  align-items: center;
  justify-content: center;
  height: 25px;
  padding: 0;
  background: #fff;
  border: solid #000;
  border-width: 0 2px 1px 1px;
  color: #000;
}

.mw-tab {
  width: 82px;
}

.nav-tab {
  width: 76px;
}

.nav-list {
  position: relative;
  width: 246px;
  padding-top: 1px;
  background: #fff;
  overflow: hidden;
}

.guide {
  position: absolute;
  top: 0;
  bottom: 0;
  border-left: 1px dotted #666;
}

.guide.first {
  left: 16px;
}

.guide.second {
  left: 42px;
}

.nav-row {
  display: flex;
  align-items: center;
  height: 22px;
  padding-left: 42px;
}

.nav-dash {
  width: 16px;
  border-top: 1px dotted #666;
}

.nav-name {
  margin-left: 7px;
  font-size: 14px;
  color: #111;
}

.chart-col {
  flex: none;
  width: 1640px;
  padding-top: 1px;
}

.chart {
  background: #000;
}

.chart-tabs {
  position: relative;
  display: flex;
  align-items: center;
  height: 27px;
  margin-top: 1px;
  padding-left: 4px;
  border-top: 1px solid #000;
  color: #808080;
}

.chart-tab {
  padding: 0 13.500px;
  border-right: 1px solid #808080;
  font-size: 14.500px;
  line-height: 18px;
}

.chart-tab.active {
  height: 26px;
  margin-left: -1px;
  background: #fff;
  border: solid #000;
  border-width: 0 2px 2px 1px;
  color: #000;
  line-height: 24px;
}

.chart-tab.last {
  border-right: 0;
}

.tab-arrow {
  position: absolute;
  top: 2px;
  font-size: 12px;
}

.tab-arrow.prev {
  left: 1597px;
  color: #999;
}

.tab-arrow.next {
  left: 1621px;
  color: #111;
}

/* Chart text and lines, the canvas is filled by chart.js */
.chart text {
  font-family: "Liberation Sans", sans-serif;
  font-size: 12.300px;
  fill: #fff;
  white-space: pre;
}

.chart .grid {
  stroke: #778899;
  stroke-dasharray: 3 3;
  fill: none;
}

.chart .frame {
  stroke: #fff;
  fill: none;
}

.chart .band {
  stroke: #35a06c;
  fill: none;
}

.chart .wick {
  stroke: #0f0;
}

.chart .body-up {
  fill: #000;
  stroke: #0f0;
}

.chart .body-down {
  fill: #fff;
  stroke: #0f0;
}

.chart .info {
  fill: #f5a100;
  font-size: 14.300px;
  text-anchor: end;
}

.chart .info-profit {
  fill: #f5a100;
  font-size: 17.500px;
  font-weight: bold;
  text-anchor: end;
}

.chart .info-site {
  fill: #4a7fe0;
  font-size: 12px;
}

.chart .price-tag {
  fill: #000;
}

/* Terminal */
.terminal {
  display: flex;
  height: 626px;
  border-bottom: 1px solid #a8a8a8;
}

.term-side {
  display: flex;
  flex: none;
  flex-direction: column;
  width: 20px;
  padding: 3px 0 5px 3px;
}

.term-x {
  height: 18px;
  font-family: "Liberation Sans", sans-serif;
  font-size: 16px;
  font-weight: bold;
  line-height: 14px;
  padding-left: 2px;
}

.term-strip {
  display: flex;
  flex: 1;
  flex-direction: column;
  justify-content: flex-end;
  align-items: center;
  width: 12px;
  background: linear-gradient(to bottom, #dce8f4, #bcd0e4);
}

.term-name {
  margin-bottom: 2px;
  writing-mode: vertical-rl;
  transform: rotate(180deg);
  font-family: "DejaVu Sans", sans-serif;
  font-size: 12px;
  letter-spacing: .3px;
  line-height: 12px;
  color: #222;
}

.term-main {
  display: flex;
  flex-direction: column;
  width: 1894px;
  padding: 3px 0 5px;
}

.term-sheet {
  flex: 1;
  border-top: 1px solid #a0a0a0;
  background: #fff;
}

.orders {
  width: 1894px;
  table-layout: fixed;
  border-collapse: separate;
  border-spacing: 0;
  font-size: 13.500px;
}

.c103 { width: 103px; }
.c128 { width: 128px; }
.c129 { width: 129px; }
.c130 { width: 130px; }
.c151 { width: 151px; }
.c168 { width: 168px; }
.c284 { width: 284px; }
.c285 { width: 285px; }

.orders th,
.orders td {
  height: 25px;
  padding: 0 3px 0 0;
  border-right: 1px solid #c8c8c8;
  border-bottom: 1px solid #c8c8c8;
  font-weight: normal;
  text-align: right;
  white-space: nowrap;
}

.orders th {
  height: 26px;
  padding-right: 4px;
  border-right-color: #e8e8e8;
  color: #111;
  font-size: 14.300px;
}

.orders th.left {
  padding-left: 7px;
  text-align: left;
}

.orders th.sorted {
  padding-right: 8px;
}

.sort-mark {
  margin-left: 8px;
  color: #888;
  font-size: 10px;
}

.orders td.id {
  padding-left: 4px;
  text-align: left;
}

.orders td.id svg {
  float: left;
  margin: 1px 6px 0 0;
}

.orders .alt td {
  background: #e9e9e9;
}

.orders .selected td {
  background: #0078d7;
  border-color: #0078d7;
  border-right-color: #c8d8e8;
  color: #fff;
}

.orders td.hit-tp {
  background: #5ff05f;
  box-shadow: inset 0 0 0 1px #e9e9e9;
}

.orders tr:not(.alt):not(.selected) td.hit-tp,
.orders tr:not(.alt):not(.selected) td.hit-sl {
  box-shadow: inset 0 0 0 1px #fff;
}

.orders .selected td.hit-tp {
  background: #5ff05f;
  border-color: #c8d8e8;
  box-shadow: inset 0 0 0 1px #2f8fd8;
  color: #000;
}

.orders td.hit-sl {
  background: #ff9f9f;
  box-shadow: inset 0 0 0 1px #e9e9e9;
}

.orders .total td {
  background: #c6c6c6;
  border: 0;
  font-size: 14.800px;
  font-weight: bold;
  padding-right: 5px;
}

.total-dot {
  display: inline-block;
  width: 10px;
  height: 10px;
  margin: 0 9px 0 5px;
  border: 2px solid #8f8f8f;
  border-radius: 50%;
  background: #b5b5b5;
  vertical-align: -1px;
}

.term-tabs {
  display: flex;
  flex: none;
  align-items: flex-start;
  height: 27px;
  padding-left: 3px;
  border-top: 1px solid #000;
  border-bottom: 1px solid #fff;
  color: #808080;
}

.term-tab {
  margin-top: 4px;
  padding: 0 12.300px;
  border-right: 1px solid #808080;
  font-size: 14.200px;
  line-height: 18px;
}

.term-tab.active {
  margin-top: 0;
  height: 25px;
  padding: 0 12px 0 13px;
  margin-left: -1px;
  background: #fff;
  border: solid #000;
  border-width: 0 2px 2px 1px;
  color: #000;
  line-height: 23px;
}

.count {
  margin-left: -1px;
  color: #f00;
  font-size: 11px;
  font-weight: bold;
  vertical-align: -3px;
}

/* Status bar */
.statusbar {
  display: flex;
  height: 27px;
}

.st {
  display: flex;
  flex: none;
  align-items: center;
  border-right: 1px solid #a8a8a8;
  margin-top: 5px;
  font-size: 14px;
  line-height: 22px;
  color: #111;
}

.st-help {
  width: 1048px;
  padding-left: 2px;
  border-right: 0;
}

.st-profile {
  width: 149px;
  padding-left: 6px;
  border-left: 1px solid #a8a8a8;
}

.st-131 { width: 131px; }
.st-89 { width: 89px; }
.st-86 { width: 86px; }
.st-87 { width: 87px; }
.st-83 { width: 83px; }

.st-conn {
  flex: 1;
  gap: 4px;
  padding-left: 6px;
  border-right: 0;
}

.taskbar {
  height: 2px;
  background: #2a2a2a;
}

.task-thumb {
  display: block;
  width: 60px;
  height: 2px;
  margin-left: 680px;
  background: #666;
}
```

FILE: chart.js
```js
// EURUSD,M5 chart. Values are read in picture rows: y = 90 + v / 3
const svg = document.getElementById("chart");
const NS = "http://www.w3.org/2000/svg";

function add(tag, attrs, text) {
  const el = document.createElementNS(NS, tag);
  for (const key in attrs) el.setAttribute(key, attrs[key]);
  if (text) el.textContent = text;
  svg.appendChild(el);
  return el;
}

const row = (v) => 90 + v / 3;
const leftX = (x) => 280 + x / 2.45;
const rightX = (x) => 900 + x / 1.537;

// [high, low, body top, body bottom, 1 when the bar closed lower]
const bars = [
  [470,510,485,507,1],[435,512,490,512,0],[420,497,425,475,0],[370,525,392,437,0],[280,405,370,376,0],
  [285,405,358,373,0],[285,378,358,370,1],[342,392,372,376,1],[358,420,358,367,0],[350,395,360,367,1],
  [285,370,305,370,0],[290,355,308,316,1],[315,405,323,350,1],[312,375,352,373,1],[362,392,367,376,1],
  [362,395,372,376,1],[345,380,360,377,0],[285,385,290,370,0],[288,365,292,322,1],[315,392,325,390,1],
  [368,415,382,412,1],[400,515,415,515,1],[505,582,508,547,1],[487,547,515,547,0],[515,568,520,562,1],
  [550,595,553,586,1],[568,678,592,640,1],[520,653,535,653,0],[547,625,547,617,1],[578,670,617,620,1],
  [595,680,595,602,0],[528,603,550,577,0],[437,550,487,543,0],[485,590,490,565,1],[535,578,550,566,0],
  [552,590,552,554,1],[518,555,545,550,1],[540,570,547,550,1],[543,570,547,562,1],[522,608,535,569,0],
  [483,555,522,548,0],[498,538,505,508,1],[440,535,470,524,0],[445,468,460,465,1],[463,522,463,512,1],
  [500,545,503,527,1],[518,545,522,533,0],[505,582,523,580,1],[495,610,568,580,0],[548,590,556,572,0],
  [530,590,550,562,0],[535,575,547,556,1],[562,630,562,628,1],[615,678,628,655,1],[615,662,622,662,0],
  [615,640,618,622,1],[550,642,572,628,0],[520,600,533,571,0],[480,575,490,545,0],[458,525,462,497,0],
  [380,500,445,465,0],[378,500,412,445,0],[400,468,412,427,1],[325,420,328,418,0],[330,360,332,355,1],
  [345,402,348,355,0],[378,487,392,455,1],[452,527,455,524,1],[526,698,526,675,1],[657,770,677,745,1],
  [700,805,728,748,0],[645,730,660,725,0],[585,680,596,675,0],[552,630,598,602,1],[505,660,510,602,0],
  [475,520,503,512,0],[445,520,499,506,0],[402,505,448,498,0],[440,610,448,565,1],[515,588,547,550,1],
  [345,548,390,545,0],[345,410,382,388,1],[295,415,303,390,0],[260,350,303,340,1],[285,395,345,355,1],
  [345,398,355,375,1],[345,400,372,376,1],[355,395,362,373,0],[312,400,352,373,0],[355,447,355,445,1],
  [400,500,427,445,1],[400,470,437,458,1],[430,465,445,457,0],[368,450,368,445,0],[335,380,337,362,0],
  [243,365,316,335,0],[250,360,313,316,1],[260,360,317,323,1],[300,340,310,317,1],[228,310,238,305,0],
  [220,272,245,270,1],[210,290,222,252,0],[170,285,235,250,0],[210,252,235,250,0],[225,290,250,287,1],
  [195,290,215,288,0],[170,222,175,220,0],[165,215,175,182,1],[160,215,177,180,1],[170,212,175,182,1],
  [180,220,183,217,1],[205,232,207,222,1],[205,252,213,238,0],[120,225,145,220,0],[125,175,145,170,1],
  [150,195,163,187,1],[183,258,190,255,1],[257,360,257,357,1],[315,358,322,357,0],[255,330,285,330,0],
  [262,315,270,285,0],[265,330,276,288,0],[265,300,265,290,0],[225,290,247,265,0],[210,255,240,250,1],
  [250,480,255,478,1],[352,482,352,482,0],[310,352,315,350,0],[283,355,318,325,1],[310,358,316,328,1],
  [315,360,322,340,1],[320,368,332,343,1],[240,358,243,345,0],[215,290,245,272,1],[130,285,160,280,0],
  [145,292,155,238,0],[62,235,130,232,0],[125,190,130,165,1],[120,357,172,257,1]
];

const upper = [
  [5,395],[30,398],[60,365],[85,350],[125,335],[160,315],[200,290],[260,285],[320,272],[355,265],[400,283],
  [430,258],[480,235],[515,214],[565,217],[595,235],[650,285],[710,330],[750,430],[790,483],[830,465],[870,452],
  [910,455],[980,468],[1030,465],[1060,455],[1130,455],[1200,415],[1240,360],[1280,315],[1340,305],[1360,290],
  [1420,283],[1500,283],[1530,275]
].map(([x, y]) => [leftX(x), row(y)]).concat([
  [20,275],[45,270],[60,250],[85,250],[130,220],[150,235],[190,282],[220,250],[245,245],[270,228],[305,200],
  [345,160],[380,118],[405,115],[430,140],[490,122],[575,125],[590,95],[640,130],[690,160],[720,150],[748,122]
].map(([x, y]) => [rightX(x), row(y)]));

const middle = [
  [5,607],[60,560],[120,510],[200,460],[260,420],[320,390],[370,372],[425,372],[480,400],[540,430],[600,465],
  [680,515],[750,545],[800,557],[850,550],[930,535],[990,530],[1060,550],[1130,553],[1200,540],[1280,510],
  [1330,510],[1400,535],[1470,527],[1530,515]
].map(([x, y]) => [leftX(x), row(y)]).concat([
  [30,518],[60,508],[100,510],[130,495],[170,445],[230,395],[290,345],[330,337],[375,305],[430,250],[470,226],
  [530,232],[575,235],[620,265],[670,290],[710,292],[748,275]
].map(([x, y]) => [rightX(x), row(y)]));

const lower = [
  [5,815],[40,750],[80,730],[140,645],[205,625],[250,590],[320,510],[395,455],[425,490],[460,560],[500,610],
  [570,685],[600,695],[660,705],[710,708],[790,632],[850,645],[910,620],[980,598],[1010,600],[1060,650],
  [1150,653],[1240,690],[1280,705],[1320,700],[1400,785],[1430,780],[1500,748],[1568,760]
].map(([x, y]) => [leftX(x), row(y)]).concat([
  [50,765],[120,767],[140,735],[175,600],[195,565],[245,527],[265,470],[305,478],[378,478],[430,365],[470,320],
  [540,345],[580,350],[600,405],[670,437],[705,425],[725,435],[748,427]
].map(([x, y]) => [rightX(x), row(y)]));

// Grid
const priceRows = [
  [140.5, "1.14100"],
  [192.5, "1.14055"],
  [244.5, "1.14010"],
  [296.5, "1.13965"],
  [348.5, "1.13920"]
];

for (let x = 330.5; x < 1858; x += 48) {
  add("line", { class: "grid", x1: x, y1: 93, x2: x, y2: 372 });
}

priceRows.forEach(([y, label]) => {
  add("line", { class: "grid", x1: 282, y1: y, x2: 1858, y2: y });
  add("line", { class: "frame", x1: 1858, y1: y, x2: 1862, y2: y });
  add("text", { x: 1865, y: y + 4 }, label);
});

// Level lines
add("line", { x1: 282, y1: 168.5, x2: 1858, y2: 168.5, stroke: "#f00" });
add("line", { x1: 282, y1: 175.5, x2: 1858, y2: 175.5, stroke: "#778899" });
add("line", { x1: 282, y1: 186.5, x2: 1850, y2: 186.5, stroke: "#2fd02f", "stroke-dasharray": "9 3 2 3" });
add("line", { x1: 282, y1: 241.5, x2: 1850, y2: 241.5, stroke: "#e02020", "stroke-dasharray": "9 3 2 3" });

// Bollinger bands
[upper, middle, lower].forEach((band) => {
  add("polyline", { class: "band", points: band.map((p) => p.map((n) => n.toFixed(1)).join(",")).join(" ") });
});

// Candles
bars.forEach(([high, low, top, bottom, down], i) => {
  const x = 282.5 + 8 * i;
  add("line", { class: "wick", x1: x, y1: row(high), x2: x, y2: row(low) });
  add("rect", {
    class: down ? "body-down" : "body-up",
    x: x - 2,
    y: Math.round(row(top)) + 0.5,
    width: 4,
    height: Math.max(1, Math.round((bottom - top) / 3))
  });
});

// Frame and axis labels
add("rect", { class: "frame", x: 281.5, y: 92.5, width: 1576, height: 279.5 });
add("path", { d: "M1395 93h9l-4.500 6z", fill: "#778899" });

const times = [
  "13 Jul 2017", "13 Jul 21:30", "13 Jul 22:30", "13 Jul 23:30", "14 Jul 00:30", "14 Jul 01:30",
  "14 Jul 02:30", "14 Jul 03:30", "14 Jul 04:30", "14 Jul 05:30", "14 Jul 06:30", "14 Jul 07:30"
];
times.forEach((label, i) => {
  const x = 282 + 96 * i;
  add("line", { class: "frame", x1: x + 0.5, y1: 372, x2: x + 0.5, y2: 376 });
  add("text", { x: x, y: 388 }, label);
});

add("path", { d: "M285 99h9l-4.500 6z", fill: "#fff" });
add("text", { x: 300, y: 106 }, "EURUSD,M5  1.14094 1.14094 1.14041 1.14070");
add("text", { x: 290, y: 183 }, "#52860676 sell 0.17");
add("text", { x: 290, y: 238 }, "#52860676 tp");

// Price tags on the axis
add("rect", { x: 1859, y: 161, width: 57, height: 12, fill: "#f00" });
add("text", { class: "price-tag", x: 1865, y: 171 }, "1.14076");
add("rect", { x: 1859, y: 170, width: 57, height: 13, fill: "#fff" });
add("text", { class: "price-tag", x: 1865, y: 181 }, "1.14070");

// Expert advisor text
add("line", { x1: 1637, y1: 139.5, x2: 1673, y2: 139.5, stroke: "#4a7fe0" });
add("line", { x1: 1811, y1: 139.5, x2: 1827, y2: 139.5, stroke: "#4a7fe0" });
add("text", { class: "info-site", x: 1677, y: 144 }, "www.FOREXROBOT.eu");

[
  [156, "Margin 250.00; StopLevel 0.0"],
  [171, "Spread 0.6; TickValue 0.88"],
  [186, "Swap Long -6.10 / Short 1.50"],
  [201.5, "MinLot 0.01; Leverage 1 : 400"],
  [216.5, "0x BUY 0.00 / 1x SELL 0.17"]
].forEach(([y, label]) => {
  add("text", { class: "info", x: 1848.5, y: y }, label);
});
add("text", { class: "info-profit", x: 1848.5, y: 236 }, "Profit -2.38 EUR");
```
